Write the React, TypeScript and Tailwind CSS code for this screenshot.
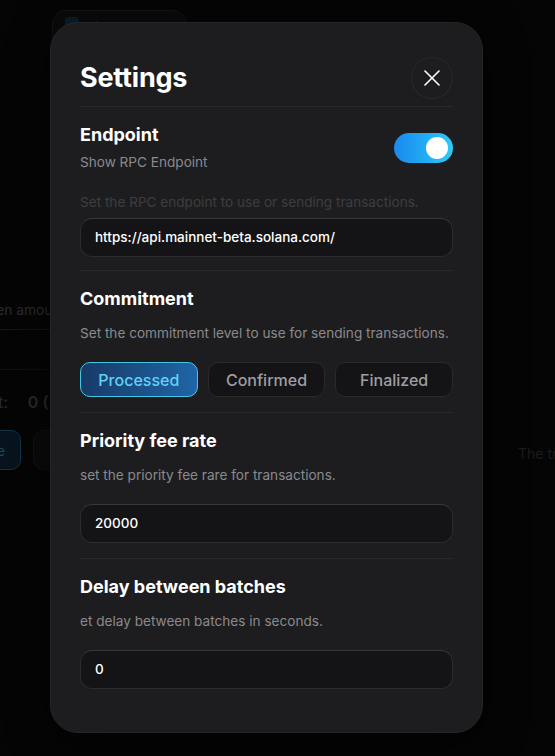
import { X } from "lucide-react";

const Divider = () => <div className="h-px bg-[#2a2a2c]" />;

const Field = ({ value }: { value: string }) => (
  <div className="flex h-[39px] items-center rounded-[12px] border border-[#2c2c2e] border-t-[#38383a] bg-[#141416] px-[14px] text-[13.5px] font-medium text-white">
    {value}
  </div>
);

const Section = ({ title, desc, gap, children }: { title: string; desc: string; gap: string; children: React.ReactNode }) => (
  <div className="pt-[14px]">
    <h3 className="text-[18px] leading-[28px] font-bold text-white">{title}</h3>
    <p className="mt-[10px] whitespace-nowrap text-[13.6px] leading-[20px] text-[#8a8a8e]">{desc}</p>
    <div className={gap}>{children}</div>
  </div>
);

const Background = () => (
  <div className="flex h-[756px] w-full bg-[#050505] text-[13.75px]">
    <div className="w-[300px] flex flex-col">
      <div className="ml-[52px] mt-[10px] flex h-[40px] w-[135px] items-start gap-2 rounded-[14px] border border-[#131315] bg-[#0a0a0b] px-3 pt-[6px] text-[#2a2a2c]">
        <span className="h-[14px] w-[14px] rounded bg-[#0c1e2a]" />
        <span>Filter EU</span>
      </div>
      <div className="mt-[250px] -ml-[27px] whitespace-nowrap text-[#2c2c2e]">Token amount</div>
      <div className="mt-[8px] h-px w-[50px] bg-[#141416]" />
      <div className="mt-[39px] h-px w-[50px] bg-[#101012]" />
      <div className="mt-[20px] flex gap-[20px] text-[16px] text-[#2a2a2c]">
        <span className="-ml-[2px]">t:</span>
        <span className="font-semibold whitespace-nowrap">0 (</span>
      </div>
      <div className="mt-[16px] flex gap-[12px]">
        <div className="-ml-[60px] h-[40px] w-[81px] rounded-[10px] border border-[#0f3346] bg-[#07141d] pl-[56px] pt-[10px] text-[#1c4a60]">e</div>
        <div className="h-[40px] w-[60px] rounded-[10px] border border-[#121214] bg-[#0a0a0b]" />
      </div>
    </div>
    <div className="ml-auto w-[37px] pt-[443px] text-[14px] whitespace-nowrap text-[#1b1b1d]">The tr</div>
  </div>
);

export default function App() {
  return (
    <div className="relative h-[756px] w-[555px] overflow-hidden" style={{ fontFamily: "Inter, 'Noto Sans', sans-serif" }}>
      <Background />
      <div className="absolute left-[50px] top-[22px] w-[433px] rounded-[28px] border border-[#252527] bg-[#1d1d1f] px-[29px] pt-[34px] pb-[43px] shadow-[0_10px_40px_rgba(0,0,0,0.6)]">
        <div className="flex h-[42px] items-center justify-between">
          <h2 className="text-[27px] font-bold tracking-[-0.2px] text-white">Settings</h2>
          <button className="flex h-[42px] w-[42px] items-center justify-center rounded-full border border-[#29292b]">
            <X size={28} strokeWidth={1.4} className="text-white" />
          </button>
        </div>
        <div className="mt-[7px]">
          <Divider />
        </div>

        <div className="pt-[14px]">
          <div className="flex items-start justify-between">
            <div>
              <h3 className="text-[18px] leading-[28px] font-bold text-white">Endpoint</h3>
              <p className="mt-[3px] text-[13.6px] leading-[20px] text-[#8a8a8e]">Show RPC Endpoint</p>
            </div>
            <div className="mt-[12px] flex h-[30px] w-[59px] items-center justify-end rounded-full bg-gradient-to-r from-[#1c88ee] to-[#2fcaf6] pr-[5px]">
              <div className="h-[22px] w-[22px] rounded-full bg-white" />
            </div>
          </div>
          <p className="mt-[20px] whitespace-nowrap text-[13.6px] leading-[20px] text-[#3d3d40]">Set the RPC endpoint to use or sending transactions.</p>
          <div className="mt-[6px]">
            <Field value="https://api.mainnet-beta.solana.com/" />
          </div>
        </div>
        <div className="mt-[13px]">
          <Divider />
        </div>

        <Section title="Commitment" desc="Set the commitment level to use for sending transactions." gap="mt-[19px]">
          <div className="grid grid-cols-3 gap-[10px]">
            <button className="h-[35px] rounded-[10px] border border-[#45c6e6] bg-gradient-to-r from-[#173b66] to-[#1f65a8] text-[16px] font-medium text-[#5fd2f6]">
              Processed
            </button>
            <button className="h-[35px] rounded-[10px] border border-[#2a2a2c] bg-[#141416] text-[16px] font-medium text-[#9e9ea2]">
              Confirmed
            </button>
            <button className="h-[35px] rounded-[10px] border border-[#2a2a2c] bg-[#141416] text-[16px] font-medium text-[#9e9ea2]">
              Finalized
            </button>
          </div>
        </Section>
        <div className="mt-[15px]">
          <Divider />
        </div>

        <Section title="Priority fee rate" desc="set the priority fee rare for transactions." gap="mt-[19px]">
          <Field value="20000" />
        </Section>
        <div className="mt-[15px]">
          <Divider />
        </div>

        <Section title="Delay between batches" desc="et delay between batches in seconds." gap="mt-[19px]">
          <Field value="0" />
        </Section>
      </div>
    </div>
  );
}
